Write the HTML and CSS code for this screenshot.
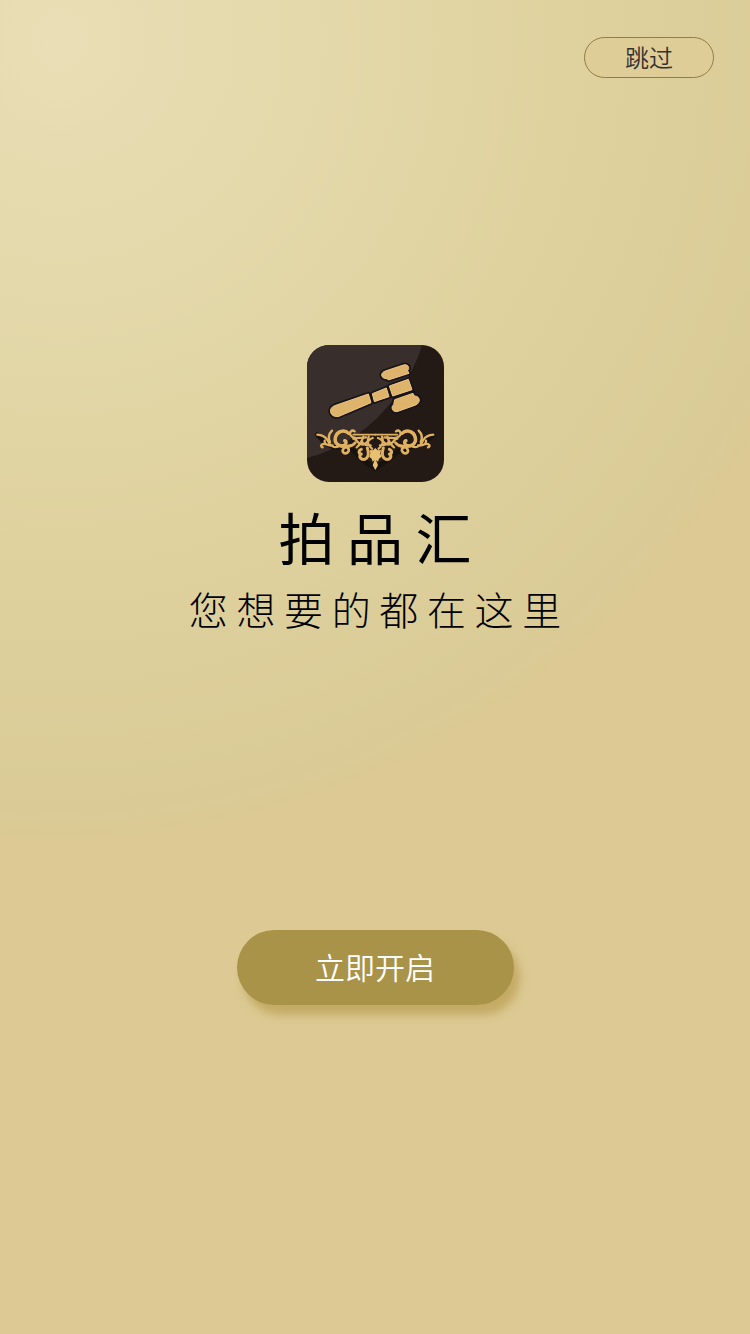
FILE: index.html
```html
<!DOCTYPE html>
<html lang="zh-CN">
<head>
<meta charset="utf-8">
<meta name="viewport" content="width=device-width, initial-scale=1">
<title>拍品汇</title>
<link rel="stylesheet" href="styles.css">
</head>
<body>
<div class="splash">
  <header class="topbar">
    <button class="skip" type="button">跳过</button>
  </header>
  <main class="intro">
    <svg class="logo" viewBox="0 0 411 411" aria-hidden="true">
      <defs>
        <clipPath id="tile"><rect width="411" height="411" rx="66"/></clipPath>
        <path id="gavel" d="M104 203 205 168 213 194 117 235C92 241 81 212 104 203ZM217 167 259 150 267 176 223 191ZM268 144 325 124 336 155 278 174ZM256 99 310 81C325 77 330 90 323 98L327 106 265 126 261 122C241 122 240 104 256 99ZM284 185 339 166 343 174C361 174 363 194 347 201L294 220C277 225 271 207 281 200Z"/>
        <g id="scroll">
          <path d="M226 290H160" stroke-width="5"/>
          <path d="M164 280c-8-6-18 2-12 12 8 12 24 8 46 6M160 302c14 2 12 18 28 18 12 0 16-16 30-20M170 328c8-6 16-18 20-32M186 312c8 10 14 10 26 10M206 296c-6 14 0 28 10 36" stroke-width="7"/>
          <path d="M146 286c-12-12-36-8-40 12-4 18 12 30 26 24 8-4 8-12 2-14" stroke-width="10"/>
          <path d="M122 280c-16 10-20 26-12 38 12 12 30 8 44 4M132 330c-10 12 2 20 10 14 8-6 4-16-4-16 10-2 22-6 28-14" stroke-width="8"/>
          <path d="M114 326c-18 6-26-8-32-20-6-10-14-15-30-16M98 322c-14 2-26-4-24-14M90 312c-6-12-4-24 6-34M76 318c-14-2-16 8-8 10" stroke-width="7"/>
          <path d="M184 334c-10 4-8 14 0 14M202 330c4 12 6 28-8 34-12 2-18-8-12-14" stroke-width="9"/>
        </g>
      </defs>
      <g clip-path="url(#tile)">
        <rect width="411" height="411" fill="#231a16"/>
        <path d="M0 0H345C310 120 194 290 0 339Z" fill="#382f2d"/>
        <g transform="translate(-21 -21)">
          <use href="#gavel" fill="none" stroke="#17141b" stroke-width="13" stroke-linejoin="round"/>
          <use href="#gavel" fill="#deb46c" stroke="#f0c678" stroke-width="3" stroke-linejoin="round"/>
          <path d="M52 290Q88 335 120 328T180 360L226 392 272 360Q290 335 330 328T400 290" fill="none" stroke="#17110f" stroke-linecap="round" stroke-width="14"/>
          <g fill="none" stroke="#e0b160" stroke-linecap="round" stroke-linejoin="round">
            <use href="#scroll"/>
            <use href="#scroll" transform="translate(452 0) scale(-1 1)"/>
          </g>
          <path d="M226 330 233 337 243 336 241 346 244 357 237 362 234 371 228 366 234 382 226 396 218 382 224 366 218 371 215 362 208 357 211 346 209 336 219 337Z" fill="#e9c070"/>
        </g>
      </g>
    </svg>
    <h1 class="name">拍 品 汇</h1>
    <p class="slogan">您 想 要 的 都 在 这 里</p>
    <button class="start" type="button">立即开启</button>
  </main>
</div>
</body>
</html>
```
FILE: styles.css
```css
* {
  box-sizing: border-box;
}

body {
  margin: 0;
  font-family: "Noto Sans CJK SC", sans-serif;
}

button {
  padding: 0 0 2px;
  border: 0;
  font-family: inherit;
  font-weight: 350;
  cursor: pointer;
}

.splash {
  min-height: 100vh;
  background: radial-gradient(circle at 60px 40px, #e9deb5 0, #e4d9ab 240px, #dfd29f 500px, #dacb96 770px, #dcc993 800px);
}

.topbar {
  display: flex;
  justify-content: flex-end;
  padding: 37px 36px 0;
}

.skip {
  min-width: 130px;
  height: 41px;
  border: 1px solid #937d3c;
  border-radius: 21px;
  background: #dfcd98;
  color: #333;
  font-size: 24px;
  line-height: 36px;
}

.intro {
  display: flex;
  flex-direction: column;
  align-items: center;
  padding: 20vh 24px 48px;
}

.logo {
  width: 137px;
  height: 137px;
}

.name {
  margin: 22px 0 0;
  color: #000;
  font-size: 56px;
  font-weight: 400;
  line-height: 64px;
}

.slogan {
  margin: 16px 0 0;
  color: #000;
  font-size: 39px;
  font-weight: 300;
  line-height: 48px;
}

.start {
  min-width: 277px;
  height: 75px;
  margin-top: 298px;
  border-radius: 38px;
  background: #a99349;
  box-shadow: 6px 10px 8px #c4ab65;
  color: #fff;
  font-size: 30px;
}
```
